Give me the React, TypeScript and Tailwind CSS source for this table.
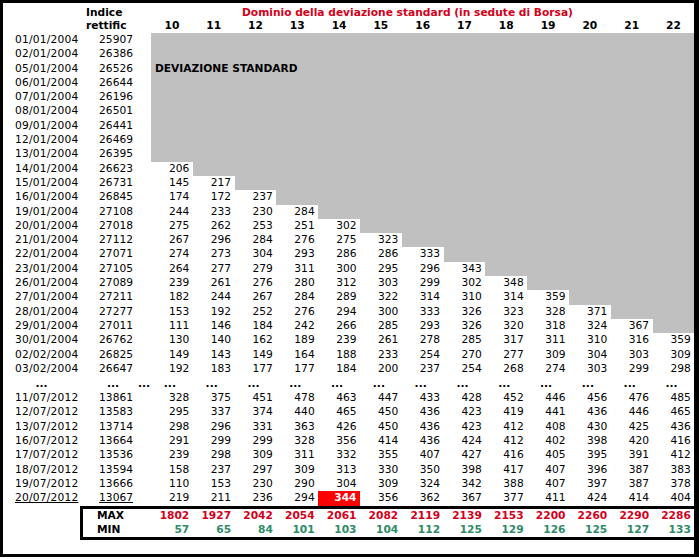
const COLS = [10, 11, 12, 13, 14, 15, 16, 17, 18, 19, 20, 21, 22];

const GRID = "grid grid-cols-[77px_57px_14px_repeat(13,41.8px)]";

const topRows: [string, string, number[]][] = [
    ["01/01/2004", "25907", []],
    ["02/01/2004", "26386", []],
    ["05/01/2004", "26526", []],
    ["06/01/2004", "26644", []],
    ["07/01/2004", "26196", []],
    ["08/01/2004", "26501", []],
    ["09/01/2004", "26441", []],
    ["12/01/2004", "26469", []],
    ["13/01/2004", "26395", []],
    ["14/01/2004", "26623", [206]],
    ["15/01/2004", "26731", [145, 217]],
    ["16/01/2004", "26845", [174, 172, 237]],
    ["19/01/2004", "27108", [244, 233, 230, 284]],
    ["20/01/2004", "27018", [275, 262, 253, 251, 302]],
    ["21/01/2004", "27112", [267, 296, 284, 276, 275, 323]],
    ["22/01/2004", "27071", [274, 273, 304, 293, 286, 286, 333]],
    ["23/01/2004", "27105", [264, 277, 279, 311, 300, 295, 296, 343]],
    ["26/01/2004", "27089", [239, 261, 276, 280, 312, 303, 299, 302, 348]],
    ["27/01/2004", "27211", [182, 244, 267, 284, 289, 322, 314, 310, 314, 359]],
    ["28/01/2004", "27277", [153, 192, 252, 276, 294, 300, 333, 326, 323, 328, 371]],
    ["29/01/2004", "27011", [111, 146, 184, 242, 266, 285, 293, 326, 320, 318, 324, 367]],
    ["30/01/2004", "26762", [130, 140, 162, 189, 239, 261, 278, 285, 317, 311, 310, 316, 359]],
    ["02/02/2004", "26825", [149, 143, 149, 164, 188, 233, 254, 270, 277, 309, 304, 303, 309]],
    ["03/02/2004", "26647", [192, 183, 177, 177, 184, 200, 237, 254, 268, 274, 303, 299, 298]],
];

const bottomRows: [string, string, number[]][] = [
    ["11/07/2012", "13861", [328, 375, 451, 478, 463, 447, 433, 428, 452, 446, 456, 476, 485]],
    ["12/07/2012", "13583", [295, 337, 374, 440, 465, 450, 436, 423, 419, 441, 436, 446, 465]],
    ["13/07/2012", "13714", [298, 296, 331, 363, 426, 450, 436, 423, 412, 408, 430, 425, 436]],
    ["16/07/2012", "13664", [291, 299, 299, 328, 356, 414, 436, 424, 412, 402, 398, 420, 416]],
    ["17/07/2012", "13536", [239, 298, 309, 311, 332, 355, 407, 427, 416, 405, 395, 391, 412]],
    ["18/07/2012", "13594", [158, 237, 297, 309, 313, 330, 350, 398, 417, 407, 396, 387, 383]],
    ["19/07/2012", "13666", [110, 153, 230, 290, 304, 309, 324, 342, 388, 407, 397, 387, 378]],
    ["20/07/2012", "13067", [219, 211, 236, 294, 344, 356, 362, 367, 377, 411, 424, 414, 404]],
];

const maxValues = [1802, 1927, 2042, 2054, 2061, 2082, 2119, 2139, 2153, 2200, 2260, 2290, 2286];
const minValues = [57, 65, 84, 101, 103, 104, 112, 125, 129, 126, 125, 127, 133];

function DataRow({ date, index, values, last }: { date: string; index: string; values: number[]; last?: boolean }) {
    return (
        <div className={`${GRID} h-[14.3px] leading-[14.3px]`}>
            <div className="pl-[12px] tracking-[0.2px]">
                <span className={last ? "underline underline-offset-[1px]" : ""}>{date}</span>
            </div>
            <div className="pr-[4px] text-right">
                <span className={last ? "underline underline-offset-[1px]" : ""}>{index}</span>
            </div>
            <div />
            {values.length === 0 ? (
                <div className="col-span-13 bg-[#c0c0c0] pl-[4px] font-bold whitespace-nowrap">
                    {date === "05/01/2004" ? "DEVIAZIONE STANDARD" : ""}
                </div>
            ) : (
                COLS.map((c, k) =>
                    k < values.length ? (
                        <div
                            key={c}
                            className={
                                last && c === 14
                                    ? "bg-[#ff0000] pr-[3.5px] text-right font-bold text-white"
                                    : "pr-[3.5px] text-right"
                            }
                        >
                            {values[k]}
                        </div>
                    ) : (
                        <div key={c} className="bg-[#c0c0c0]" />
                    )
                )
            )}
        </div>
    );
}

export default function App() {
    return (
        <div className="w-[699px] h-[559px] bg-white text-black font-['DejaVu_Sans',sans-serif] text-[10.67px]">
            <div className="h-[557px] border-l-[3px] border-t-[3px] border-r-[5px] border-b-[3px] border-black flex flex-col">
                <div className={`${GRID} h-[16px] pt-[3px] leading-[13px] font-bold`}>
                    <div />
                    <div className="pl-[6px]">Indice</div>
                    <div />
                    <div className="col-span-13 pl-[91px] text-[#d4001a] whitespace-nowrap">
                        Dominio della deviazione standard (in sedute di Borsa)
                    </div>
                </div>
                <div className={`${GRID} h-[14px] leading-[13px] font-bold`}>
                    <div />
                    <div className="pl-[6px]">rettific</div>
                    <div />
                    {COLS.map((c) => (
                        <div key={c} className="text-center">{c}</div>
                    ))}
                </div>

                {topRows.map(([d, i, v]) => (
                    <DataRow key={d} date={d} index={i} values={v} />
                ))}

                <div className={`${GRID} h-[15px] leading-[15px] font-bold`}>
                    <div className="text-center">...</div>
                    <div className="pl-[9px] text-center">...</div>
                    <div className="text-center">...</div>
                    {COLS.map((c) => (
                        <div key={c} className="pr-[4px] text-center">...</div>
                    ))}
                </div>

                {bottomRows.map(([d, i, v], n) => (
                    <DataRow key={d} date={d} index={i} values={v} last={n === bottomRows.length - 1} />
                ))}

                <div className="ml-[77px] border-l-[3px] border-t-[3px] border-b-[3px] border-black font-bold">
                    <div className="grid grid-cols-[54px_14px_repeat(13,41.8px)] h-[14.5px] leading-[14.5px]">
                        <div className="pl-[14px]">MAX</div>
                        <div />
                        {maxValues.map((v, k) => (
                            <div key={k} className="pr-[3.5px] text-right text-[#d4001a]">{v}</div>
                        ))}
                    </div>
                    <div className="grid grid-cols-[54px_14px_repeat(13,41.8px)] h-[14px] leading-[14px]">
                        <div className="pl-[14px]">MIN</div>
                        <div />
                        {minValues.map((v, k) => (
                            <div key={k} className="pr-[3.5px] text-right text-[#2e8b66]">{v}</div>
                        ))}
                    </div>
                </div>
            </div>
        </div>
    );
}
